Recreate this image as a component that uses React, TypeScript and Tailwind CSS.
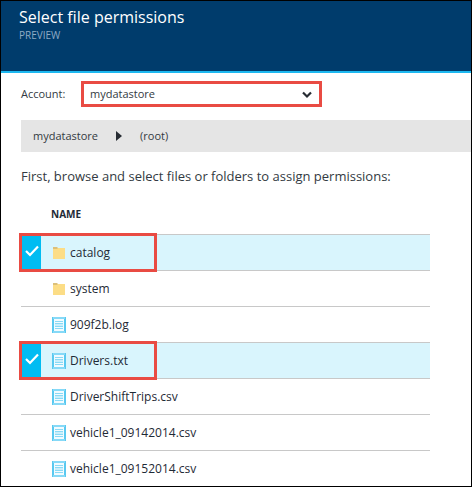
import { useState } from "react";

type Entry = { name: string; kind: "folder" | "file" };

const entries: Entry[] = [
  { name: "catalog", kind: "folder" },
  { name: "system", kind: "folder" },
  { name: "909f2b.log", kind: "file" },
  { name: "Drivers.txt", kind: "file" },
  { name: "DriverShiftTrips.csv", kind: "file" },
  { name: "vehicle1_09142014.csv", kind: "file" },
  { name: "vehicle1_09152014.csv", kind: "file" },
];

const highlighted = ["catalog", "Drivers.txt"];

function FolderIcon() {
  return (
    <svg className="h-4 w-3.5 shrink-0" viewBox="0 0 14 16" aria-hidden="true">
      <path d="M1 2h4l1 1h7v11H1z" fill="#dcc07a" />
      <path d="M1 4h4l1-1h7v11H1z" fill="#fcdd86" />
    </svg>
  );
}

function FileIcon() {
  return (
    <svg className="h-4 w-3.5 shrink-0" viewBox="0 0 14 16" aria-hidden="true">
      <rect x="0" y="0" width="14" height="16" fill="#59c9f0" />
      <rect x="1" y="0" width="12" height="2" fill="#86d9f7" />
      <rect x="1" y="14" width="12" height="2" fill="#86d9f7" />
      <rect x="2" y="2" width="10" height="12" fill="#f2fbff" />
      <rect x="3" y="6" width="8" height="4" fill="#c9eefb" />
      <path d="M3 4.500h8M3 6.500h8M3 9.500h8M3 11.500h8" stroke="#8adaf5" />
    </svg>
  );
}

function Row({ entry, checked, onToggle }: { entry: Entry; checked: boolean; onToggle: () => void }) {
  const id = `entry-${entry.name}`;
  return (
    <tr className={`h-9 border-t border-[#c8c8c8] ${checked ? "bg-[#d9f5fd]" : ""}`}>
      <td className="relative w-5 p-0">
        <input
          id={id}
          type="checkbox"
          checked={checked}
          onChange={onToggle}
          className="block h-[35px] w-5 appearance-none checked:bg-[#00bcf2]"
        />
        {checked && (
          <svg className="pointer-events-none absolute top-2.5 left-1 h-3 w-3.5" viewBox="0 0 14 12" fill="none" aria-hidden="true">
            <path d="M1 6l4 4 8-8.500" stroke="white" strokeWidth="2.200" />
          </svg>
        )}
        {highlighted.includes(entry.name) && (
          <span className="pointer-events-none absolute -top-0.5 -left-0.5 z-10 h-[39px] w-[138px] border-3 border-[#e94b43]" />
        )}
      </td>
      <td className="p-0 pt-0.5 pl-[11px]">
        <label htmlFor={id} className="flex items-center gap-1 text-[12px] leading-5 text-[#1f2a36]">
          {entry.kind === "folder" ? <FolderIcon /> : <FileIcon />}
          {entry.name}
        </label>
      </td>
    </tr>
  );
}

export default function App() {
  const [selected, setSelected] = useState<string[]>(highlighted);
  const toggle = (name: string) =>
    setSelected((s) => (s.includes(name) ? s.filter((n) => n !== name) : [...s, name]));

  return (
    <div className="min-h-screen border border-black bg-white font-['Open_Sans','Noto_Sans',sans-serif] text-[#333a42]">
      <header className="h-[72px] border-b-2 border-[#1db8f0] bg-[#003c6c] px-[18px] pt-1">
        <h1 className="text-[16px] leading-6 text-white">Select file permissions</h1>
        <p className="text-[10px] leading-3 text-[#8fabc4]">PREVIEW</p>
      </header>
      <main className="pl-5">
        <div className="flex items-center pt-2">
          <label htmlFor="account" className="w-[60px] text-[11px] leading-5">Account:</label>
          <div className="relative w-[241px]">
            <select
              id="account"
              className="block h-[26px] w-full appearance-none border-3 border-[#e94b43] bg-white pl-1.5 text-[11px] leading-5 text-[#333a42]"
            >
              <option>mydatastore</option>
            </select>
            <svg className="pointer-events-none absolute top-2.5 right-2.5 h-2 w-2.5" viewBox="0 0 10 8" fill="none" aria-hidden="true">
              <path d="M1 1.500l4 4 4-4" stroke="#272c33" strokeWidth="2.200" />
            </svg>
          </div>
        </div>
        <nav aria-label="Path" className="mt-[13px] flex h-8 items-center bg-[#e5e5e5] px-3 text-[11px]">
          <a href="#store">mydatastore</a>
          <svg className="mr-[18px] ml-[18px] h-2.5 w-1.5" viewBox="0 0 6 10" aria-hidden="true">
            <path d="M0 0l6 5-6 5z" fill="#272c33" />
          </svg>
          <a href="#root">(root)</a>
        </nav>
        <p className="mt-3.5 text-[13px] leading-5">First, browse and select files or folders to assign permissions:</p>
        <div className="mt-2.5 pr-[41px]">
          <table className="w-full border-collapse">
            <thead>
              <tr className="h-[38px]">
                <th className="w-5 p-0" />
                <th className="p-0 pl-2.5 text-left text-[10px] font-bold text-[#1f2a36]">NAME</th>
              </tr>
            </thead>
            <tbody>
              {entries.map((e) => (
                <Row key={e.name} entry={e} checked={selected.includes(e.name)} onToggle={() => toggle(e.name)} />
              ))}
            </tbody>
          </table>
        </div>
      </main>
    </div>
  );
}
